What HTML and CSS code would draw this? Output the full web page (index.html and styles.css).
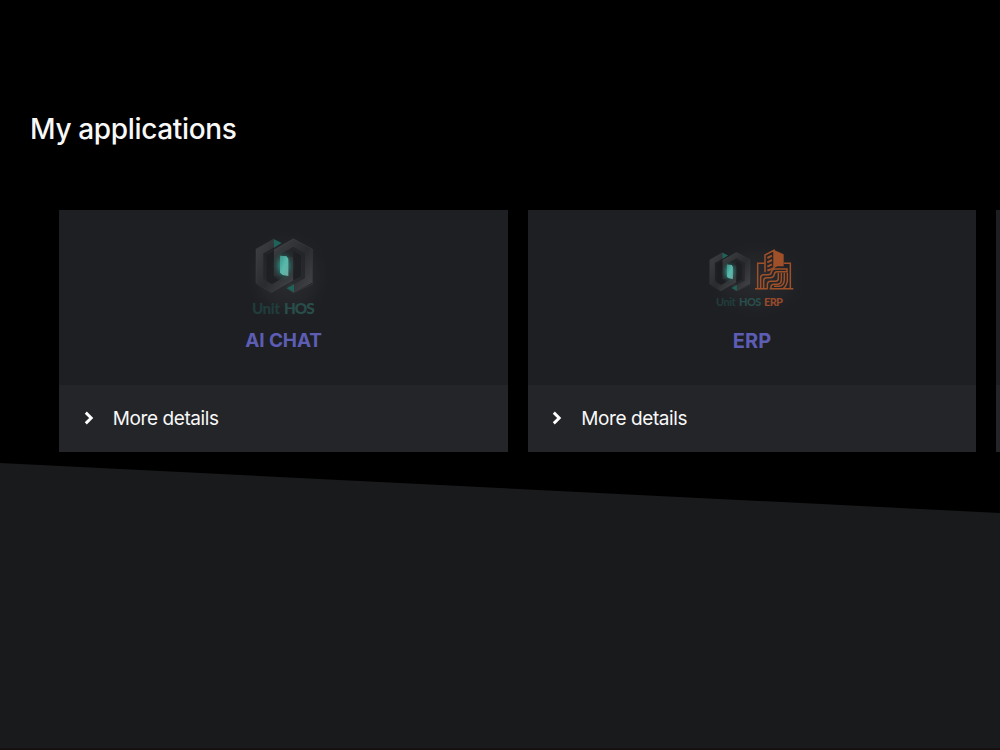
FILE: index.html
```html
<!DOCTYPE html>
<html lang="en">
<head>
<meta charset="utf-8">
<title>My applications</title>
<link rel="stylesheet" href="styles.css">
</head>
<body>
<svg class="defs" width="0" height="0" aria-hidden="true">
  <defs>
    <linearGradient id="strap" x1="0" y1="0" x2="1" y2="1"><stop offset="0" stop-color="#3b3d40"/><stop offset=".55" stop-color="#292b2e"/><stop offset="1" stop-color="#404245"/></linearGradient>
    <linearGradient id="gem" x1="0" y1="0" x2="1" y2="1"><stop offset="0" stop-color="#3d9388"/><stop offset=".5" stop-color="#57b9ac"/><stop offset="1" stop-color="#71a99f"/></linearGradient>
    <radialGradient id="glow"><stop offset="0" stop-color="#31998e" stop-opacity="1"/><stop offset=".4" stop-color="#2a7f76" stop-opacity=".75"/><stop offset=".7" stop-color="#24544f" stop-opacity=".3"/><stop offset="1" stop-color="#1d2022" stop-opacity="0"/></radialGradient>
    <radialGradient id="halo"><stop offset="0" stop-color="#303236" stop-opacity=".8"/><stop offset=".6" stop-color="#292b2f" stop-opacity=".5"/><stop offset="1" stop-color="#1e1f23" stop-opacity="0"/></radialGradient>
    <symbol id="hex" viewBox="70 34 186 176">
      <g fill="none" stroke="url(#strap)" stroke-width="22">
        <path d="M136 52L89 79V167L125 190L177 160V96"/>
        <path d="M143 152V80L190 53L236 79V166L190 191L173 181"/>
      </g>
      <path d="M110 91L131 79V155L147 165L126 177L110 167ZM190 78L213 91V154L191 166L189 153Z" fill="#1b1d20" opacity=".7"/>
      <path d="M131 42L155 54L132 68ZM170 190L192 178V202Z" fill="#1f6259"/>
      <path d="M132 76L190 42L247 72V178L190 203M78 72L131 42M78 72V175L124 203L188 166V100" fill="none" stroke="#45474a" stroke-width="1.2"/>
      <ellipse cx="161" cy="122" rx="38" ry="52" fill="url(#glow)"/>
      <path d="M150 92L170 94L175 102V153L158 150L150 143Z" fill="url(#gem)"/>
    </symbol>
  </defs>
</svg>
<main class="page">
  <h1 class="title">My applications</h1>
  <div class="cards">
    <article class="card">
      <div class="card-body">
        <svg class="logo" viewBox="0 0 330 300" role="img" aria-label="Unit HOS">
          <ellipse cx="173" cy="152" rx="135" ry="146" fill="url(#halo)"/>
          <use href="#hex" x="70" y="34" width="186" height="176"/>
          <text class="brand" x="66" y="266" font-size="46" textLength="84" fill="#203c3b">Unit</text>
          <text class="brand" x="162" y="266" font-size="46" textLength="92" fill="#294d4a">HOS</text>
        </svg>
        <h2 class="name">AI CHAT</h2>
      </div>
      <a class="more"><svg class="chevron" viewBox="0 0 10 14"><path d="M1.8 1.6L7.2 7L1.8 12.4"/></svg><span>More details</span></a>
    </article>
    <article class="card">
      <div class="card-body">
        <svg class="logo logo-erp" viewBox="0 0 330 300" role="img" aria-label="Unit HOS ERP">
          <ellipse cx="185" cy="165" rx="158" ry="125" fill="url(#halo)" opacity=".8"/>
          <use href="#hex" x="38" y="77" width="134" height="126"/>
          <g transform="translate(171 66)" fill="none" stroke="#a05028" stroke-width="4.5">
            <path d="M9 125H47M53 125H124M17 125V49H38M95 49H115V125"/>
            <path d="M39 76V24L66 10V62L48 71"/>
            <path d="M66 9L95 22V58H76L66 63Z" fill="#a05028" stroke="none"/>
            <path d="M46 33L60 26M46 46L60 39M46 59L60 52M46 71L55 67" stroke-width="6"/>
            <path d="M26 125V92Q26 83 35 83H48Q58 83 58 75Q60 66 70 66H105V74H75Q68 74 67 82Q65 92 54 92H44Q35 92 35 101V125"/>
            <path d="M46 125V114Q46 103 56 103H70Q79 103 79 94V77M57 125V119Q58 112 66 112H77Q88 110 88 99V77"/>
            <path d="M97 77V98Q96 117 80 118H66M106 77V101Q104 117 94 124"/>
          </g>
          <text class="brand" x="63" y="243" font-size="33" textLength="59" fill="#203c3b">Unit</text>
          <text class="brand" x="132" y="243" font-size="33" textLength="67" fill="#294d4a">HOS</text>
          <text class="brand" x="207" y="243" font-size="33" textLength="57" fill="#96492a">ERP</text>
        </svg>
        <h2 class="name">ERP</h2>
      </div>
      <a class="more"><svg class="chevron" viewBox="0 0 10 14"><path d="M1.8 1.6L7.2 7L1.8 12.4"/></svg><span>More details</span></a>
    </article>
    <article class="card"><div class="card-body"></div><div class="more more-empty"></div></article>
  </div>
</main>
<section class="lower"></section>
</body>
</html>
```
FILE: styles.css
```css
* { box-sizing: border-box; }
body {
  margin: 0;
  height: 750px;
  overflow: hidden;
  display: flex;
  flex-direction: column;
  background: #000;
  color: #f8f8f8;
  font-family: Inter, "Liberation Sans", sans-serif;
}
.defs { position: absolute; }
.page { height: 463px; flex: none; padding-top: 109px; }
.title {
  margin: 0 0 61px 30px;
  font-size: 28px;
  font-weight: 500;
  line-height: 40px;
  letter-spacing: -0.35px;
}
.cards {
  display: grid;
  grid-template-columns: 448.5px 448.5px minmax(0, 1fr);
  gap: 20px;
  padding-left: 59.3px;
}
.card { height: 242.4px; display: flex; flex-direction: column; background: #1e1f23; }
.card-body {
  height: 175px;
  padding-top: 15px;
  display: flex;
  flex-direction: column;
  align-items: center;
}
.logo { width: 110px; height: 100px; flex: none; margin-left: 2px; }
.logo-erp { margin-left: -4px; }
.brand { font-family: Lato, sans-serif; font-weight: 900; }
.name {
  margin: 3px 0 0;
  font-size: 19px;
  line-height: 26px;
  font-weight: 700;
  letter-spacing: -0.1px;
  color: #5c5db3;
}
.logo-erp + .name { font-size: 20px; letter-spacing: 0.1px; }
.more {
  flex: 1;
  display: flex;
  align-items: center;
  gap: 19px;
  padding-left: 24.4px;
  background: #242529;
  font-size: 19px;
  letter-spacing: -0.4px;
}
.more-empty { padding: 0; }
.chevron { width: 10px; height: 14px; margin-bottom: 2px; fill: none; stroke: #fff; stroke-width: 2.9; }
.lower {
  flex: 1;
  background: #191a1c;
  clip-path: polygon(0 0, 100% 50px, 100% 100%, 0 100%);
  border-bottom: 2px solid #151113;
}
```
